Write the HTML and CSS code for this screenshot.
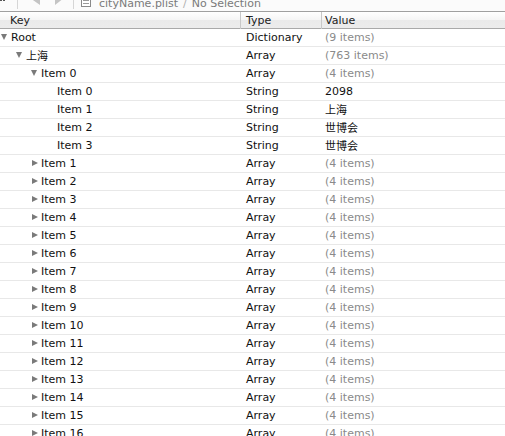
FILE: index.html
```html
<!DOCTYPE html>
<html>
<head>
<meta charset="utf-8">
<link rel="stylesheet" href="styles.css">
</head>
<body>
<div class="jumpbar">
  <svg class="ico grid" width="6" height="20" viewBox="0 0 6 20"><rect x="0" y="10" width="2" height="2" fill="#555"/><rect x="3" y="10" width="2" height="2" fill="#555"/><rect x="0" y="6" width="2" height="2" fill="#555"/><rect x="3" y="6" width="2" height="2" fill="#555"/></svg>
  <span class="vsep sep1"></span>
  <svg class="ico back" width="10" height="20" viewBox="0 0 10 20"><polygon points="10,2 10,16 0,9" fill="#c4c4c4"/></svg>
  <svg class="ico fwd" width="9" height="20" viewBox="0 0 9 20"><polygon points="0,2 0,16 9,9" fill="#c4c4c4"/></svg>
  <span class="vsep sep2"></span>
  <svg class="ico doc" width="10" height="20" viewBox="0 0 10 20"><rect x="0.5" y="2.5" width="9" height="15" fill="#fff" stroke="#8a8a8a"/><line x1="2" y1="8.5" x2="8" y2="8.5" stroke="#9a9a9a"/><line x1="2" y1="11.5" x2="8" y2="11.5" stroke="#9a9a9a"/><line x1="2" y1="14.5" x2="8" y2="14.5" stroke="#9a9a9a"/></svg>
  <span class="crumb file">cityName.plist</span>
  <span class="crumb slash">/</span>
  <span class="crumb">No Selection</span>
</div>
<div class="header">
  <div class="hcell key">Key</div>
  <div class="hcell type">Type</div>
  <div class="hcell value">Value</div>
</div>
<div class="rows">
  <div class="row"><div class="key lv0"><span class="tri open"></span>Root</div><div class="type">Dictionary</div><div class="value dim">(9 items)</div></div>
  <div class="row"><div class="key lv1"><span class="tri open"></span><span class="cjk">上海</span></div><div class="type">Array</div><div class="value dim">(763 items)</div></div>
  <div class="row"><div class="key lv2"><span class="tri open"></span>Item 0</div><div class="type">Array</div><div class="value dim">(4 items)</div></div>
  <div class="row"><div class="key lv3"><span class="tri none"></span>Item 0</div><div class="type">String</div><div class="value">2098</div></div>
  <div class="row"><div class="key lv3"><span class="tri none"></span>Item 1</div><div class="type">String</div><div class="value cjk">上海</div></div>
  <div class="row"><div class="key lv3"><span class="tri none"></span>Item 2</div><div class="type">String</div><div class="value cjk">世博会</div></div>
  <div class="row"><div class="key lv3"><span class="tri none"></span>Item 3</div><div class="type">String</div><div class="value cjk">世博会</div></div>
  <div class="row"><div class="key lv2"><span class="tri closed"></span>Item 1</div><div class="type">Array</div><div class="value dim">(4 items)</div></div>
  <div class="row"><div class="key lv2"><span class="tri closed"></span>Item 2</div><div class="type">Array</div><div class="value dim">(4 items)</div></div>
  <div class="row"><div class="key lv2"><span class="tri closed"></span>Item 3</div><div class="type">Array</div><div class="value dim">(4 items)</div></div>
  <div class="row"><div class="key lv2"><span class="tri closed"></span>Item 4</div><div class="type">Array</div><div class="value dim">(4 items)</div></div>
  <div class="row"><div class="key lv2"><span class="tri closed"></span>Item 5</div><div class="type">Array</div><div class="value dim">(4 items)</div></div>
  <div class="row"><div class="key lv2"><span class="tri closed"></span>Item 6</div><div class="type">Array</div><div class="value dim">(4 items)</div></div>
  <div class="row"><div class="key lv2"><span class="tri closed"></span>Item 7</div><div class="type">Array</div><div class="value dim">(4 items)</div></div>
  <div class="row"><div class="key lv2"><span class="tri closed"></span>Item 8</div><div class="type">Array</div><div class="value dim">(4 items)</div></div>
  <div class="row"><div class="key lv2"><span class="tri closed"></span>Item 9</div><div class="type">Array</div><div class="value dim">(4 items)</div></div>
  <div class="row"><div class="key lv2"><span class="tri closed"></span>Item 10</div><div class="type">Array</div><div class="value dim">(4 items)</div></div>
  <div class="row"><div class="key lv2"><span class="tri closed"></span>Item 11</div><div class="type">Array</div><div class="value dim">(4 items)</div></div>
  <div class="row"><div class="key lv2"><span class="tri closed"></span>Item 12</div><div class="type">Array</div><div class="value dim">(4 items)</div></div>
  <div class="row"><div class="key lv2"><span class="tri closed"></span>Item 13</div><div class="type">Array</div><div class="value dim">(4 items)</div></div>
  <div class="row"><div class="key lv2"><span class="tri closed"></span>Item 14</div><div class="type">Array</div><div class="value dim">(4 items)</div></div>
  <div class="row"><div class="key lv2"><span class="tri closed"></span>Item 15</div><div class="type">Array</div><div class="value dim">(4 items)</div></div>
  <div class="row"><div class="key lv2"><span class="tri closed"></span>Item 16</div><div class="type">Array</div><div class="value dim">(4 items)</div></div>
</div>
</body>
</html>
```
FILE: styles.css
```css
html, body {
  margin: 0;
  padding: 0;
  background: #fff;
  overflow: hidden;
}
body {
  font-family: "DejaVu Sans", "Noto Sans CJK SC", sans-serif;
  font-size: 11px;
  color: #111;
  width: 505px;
  height: 436px;
}
.jumpbar {
  height: 11px;
  display: flex;
  align-items: flex-end;
  overflow: hidden;
  border-bottom: 1px solid #a0a0a0;
  background: #fbfbfb;
}
.jumpbar .ico {
  flex: none;
  display: block;
  margin-bottom: 2px;
}
.vsep {
  flex: none;
  width: 1px;
  height: 9px;
  margin-bottom: 2px;
  background: #d6d6d6;
}
.sep1 { margin-left: 11px; }
.back { margin-left: 12px; }
.fwd { margin-left: 15px; }
.sep2 { margin-left: 9px; }
.doc { margin-left: 7px; }
.crumb {
  flex: none;
  color: #7a7a7a;
  line-height: 13px;
  margin-bottom: 1px;
  white-space: nowrap;
}
.file { margin-left: 8px; }
.slash { margin-left: 5px; color: #b0b0b0; }
.crumb + .crumb:not(.slash) { margin-left: 5px; }

.header {
  display: grid;
  grid-template-columns: 240px 81px 1fr;
  height: 16px;
  border-bottom: 1px solid #a9a9a9;
  background: linear-gradient(#ffffff, #f5f5f5 50%, #eaeaea 51%, #ececec);
}
.hcell {
  line-height: 17px;
  color: #222;
}
.hcell.key { padding-left: 10px; }
.hcell.type { border-left: 1px solid #c8c8c8; padding-left: 5px; }
.hcell.value { border-left: 1px solid #c8c8c8; padding-left: 3px; }

.rows { display: flex; flex-direction: column; }
.row {
  display: grid;
  grid-template-columns: 240px 81px 1fr;
  height: 17px;
  border-bottom: 1px solid #e8e8e8;
  line-height: 17px;
  white-space: nowrap;
}
.row .key { display: flex; align-items: center; }
.row .type { padding-left: 6px; }
.row .value { padding-left: 4px; }
.dim { color: #8a8a8a; }
.cjk { font-family: "Noto Sans CJK SC", sans-serif; font-size: 11px; }

.lv0 { padding-left: 1px; }
.lv1 { padding-left: 16px; }
.lv2 { padding-left: 31px; }
.lv3 { padding-left: 47px; }

.tri {
  flex: none;
  width: 9px;
  height: 7px;
  position: relative;
  margin-right: 1px;
}
.tri.open::before {
  content: "";
  position: absolute;
  left: 0;
  top: 0;
  border-left: 3.5px solid transparent;
  border-right: 3.5px solid transparent;
  border-top: 6px solid #7a7a7a;
}
.tri.closed::before {
  content: "";
  position: absolute;
  left: 1px;
  top: 0;
  border-top: 3.5px solid transparent;
  border-bottom: 3.5px solid transparent;
  border-left: 6px solid #7a7a7a;
}
```
